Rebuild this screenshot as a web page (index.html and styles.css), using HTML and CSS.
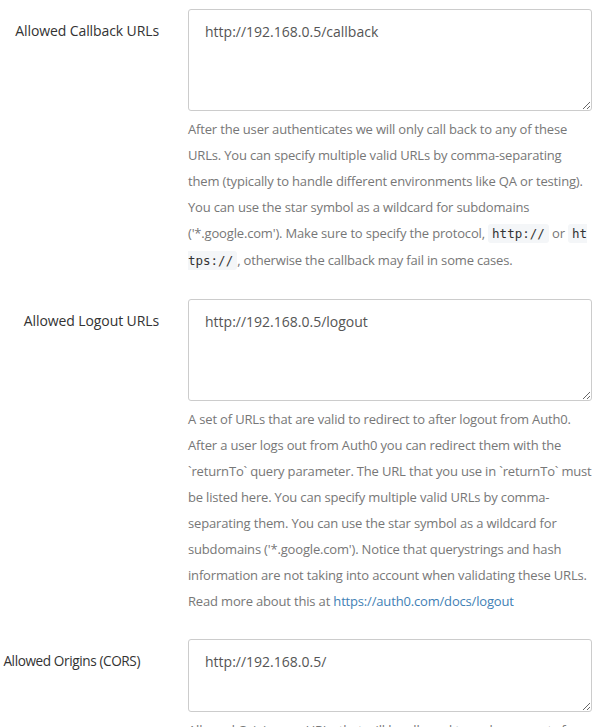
FILE: index.html
```html
<!DOCTYPE html>
<html lang="en">
<head>
<meta charset="utf-8">
<title>Application URIs</title>
<link rel="stylesheet" href="styles.css">
</head>
<body>
<form class="settings">
  <div class="row">
    <label class="label" for="cb">Allowed Callback URLs</label>
    <div class="field">
      <textarea id="cb" class="input">http://192.168.0.5/callback</textarea>
      <p class="help">After the user authenticates we will only call back to any of these URLs. You can specify multiple valid URLs by comma-separating them (typically to handle different environments like QA or testing). You can use the star symbol as a wildcard for subdomains ('*.google.com'). Make sure to specify the protocol, <code class="code">http://</code> or <code class="code">https://</code>, otherwise the callback may fail in some cases.</p>
    </div>
  </div>
  <div class="row">
    <label class="label" for="lo">Allowed Logout URLs</label>
    <div class="field">
      <textarea id="lo" class="input">http://192.168.0.5/logout</textarea>
      <p class="help">A set of URLs that are valid to redirect to after logout from Auth0. After a user logs out from Auth0 you can redirect them with the `returnTo` query parameter. The URL that you use in `returnTo` must be listed here. You can specify multiple valid URLs by comma-separating them. You can use the star symbol as a wildcard for subdomains ('*.google.com'). Notice that querystrings and hash information are not taking into account when validating these URLs. Read more about this at <a class="link" href="#">https://auth0.com/docs/logout</a></p>
    </div>
  </div>
  <div class="row">
    <label class="label label-short" for="or">Allowed Origins (CORS)</label>
    <div class="field">
      <textarea id="or" class="input input-short">http://192.168.0.5/</textarea>
      <p class="help">Allowed Origins are URLs that will be allowed to make requests from JavaScript to Auth0 API (typically used with CORS).</p>
    </div>
  </div>
</form>
</body>
</html>
```

FILE: styles.css
```css
html, body {
  margin: 0;
  padding: 0;
  background: #ffffff;
}

body {
  font-family: "Open Sans", "Liberation Sans", sans-serif;
  color: #333333;
  overflow: hidden;
}

.settings {
  padding: 9px 12px 0 0;
}

.row {
  display: grid;
  grid-template-columns: 173px 404px;
  column-gap: 15px;
  margin-bottom: 25px;
}

.label {
  justify-self: end;
  white-space: nowrap;
  text-align: right;
  font-size: 14px;
  line-height: 20px;
  padding-top: 12px;
  padding-right: 14px;
  letter-spacing: -0.1px;
  color: #333333;
}

.label-short {
  padding-right: 33px;
  font-size: 13.6px;
  letter-spacing: -0.4px;
}

.field {
  display: flex;
  flex-direction: column;
}

.input {
  box-sizing: border-box;
  width: 404px;
  height: 102px;
  margin: 0;
  padding: 12px 16px;
  border: 1px solid #cccccc;
  border-radius: 3px;
  font-family: "Open Sans", "Liberation Sans", sans-serif;
  font-size: 14px;
  line-height: 20px;
  color: #555555;
  background: #ffffff;
  resize: vertical;
}

.input-short {
  height: 73px;
}

.help {
  margin: 5px 0 0 0;
  font-size: 13px;
  line-height: 26px;
  letter-spacing: -0.17px;
  color: #777777;
}

.code {
  font-family: "DejaVu Sans Mono", "Liberation Mono", monospace;
  font-size: 12.5px;
  letter-spacing: 0;
  color: #333333;
  background: #f4f6f8;
  padding: 2px 4px;
  border-radius: 3px;
  word-break: break-all;
}

.link {
  color: #3f7fb5;
  text-decoration: none;
}
```
